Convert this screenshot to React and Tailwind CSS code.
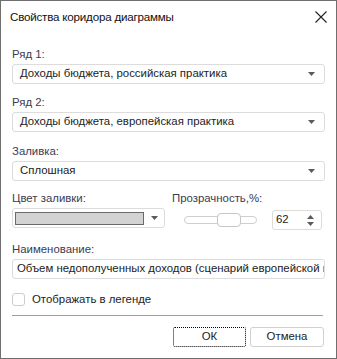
import React from "react";

const Arrow = () => (
  <svg width="7" height="4" viewBox="0 0 7 4" className="shrink-0">
    <path d="M0 0H7L3.5 4Z" fill="#5a5a5a" />
  </svg>
);

const Select = ({ value }) => (
  <div className="h-[20px] border border-[#dcdcdc] rounded-[3px] bg-white flex items-center justify-between pl-[7px] pr-[9px]">
    <span className="text-[11.4px] text-[#222]">{value}</span>
    <Arrow />
  </div>
);

const Label = ({ children, className = "" }) => (
  <div className={"text-[11.4px] leading-[14px] text-[#3b3b4f] h-[17px] " + className}>{children}</div>
);

export default function App() {
  return (
    <div
      className="w-[337px] h-[359px] bg-white border border-[#6f6f6f] flex flex-col overflow-hidden"
      style={{ fontFamily: '"Liberation Sans", Arial, sans-serif' }}
    >
      <div className="h-[31px] flex items-center justify-between pl-[9px] pr-[9px] shrink-0">
        <span className="text-[11.6px] tracking-[-0.2px] text-[#111]">Свойства коридора диаграммы</span>
        <svg width="12" height="12" viewBox="0 0 12 12">
          <path d="M0.5 0.5L11.5 11.5M11.5 0.5L0.5 11.5" stroke="#222" strokeWidth="1.1" />
        </svg>
      </div>
      <div className="px-[11px] flex flex-col">
        <Label className="mt-[15px]">Ряд 1:</Label>
        <Select value="Доходы бюджета, российская практика" />
        <Label className="mt-[11px]">Ряд 2:</Label>
        <Select value="Доходы бюджета, европейская практика" />
        <Label className="mt-[12px]">Заливка:</Label>
        <Select value="Сплошная" />
        <div className="flex mt-[10px]">
          <div className="w-[153px] flex flex-col">
            <Label>Цвет заливки:</Label>
            <div className="h-[20px] border border-[#dcdcdc] rounded-[3px] bg-white flex items-center pl-[2px] pr-[6px] gap-[7px]">
              <div className="w-[131px] h-[13px] bg-[#d3d3d3] border border-[#6a6a6a]" />
              <Arrow />
            </div>
          </div>
          <div className="ml-[7px] flex flex-col flex-1">
            <Label>Прозрачность,%:</Label>
            <div className="flex items-center mt-[2px]">
              <div className="relative w-[73px] h-[8px] ml-[12px] border border-[#cfcfcf] rounded-full bg-white">
                <div className="absolute left-[32px] top-[-4px] w-[24px] h-[14px] border border-[#c6c6c6] rounded-[4px] bg-white" />
              </div>
              <div className="ml-[15px] w-[50px] h-[20px] border border-[#dcdcdc] rounded-[3px] bg-white flex items-center justify-between pl-[3px] pr-[7px]">
                <span className="text-[11.4px] text-[#222]">62</span>
                <div className="flex flex-col gap-[3px]">
                  <svg width="7" height="4" viewBox="0 0 7 4"><path d="M0 4H7L3.5 0Z" fill="#5a5a5a" /></svg>
                  <svg width="7" height="4" viewBox="0 0 7 4"><path d="M0 0H7L3.5 4Z" fill="#5a5a5a" /></svg>
                </div>
              </div>
            </div>
          </div>
        </div>
        <Label className="mt-[12px]">Наименование:</Label>
        <div className="h-[20px] border border-[#dcdcdc] rounded-[3px] bg-white flex items-center pl-[4px] overflow-hidden whitespace-nowrap">
          <span className="text-[11.4px] text-[#222]">Объем недополученных доходов (сценарий европейской практики)</span>
        </div>
        <div className="flex items-center mt-[14px] h-[13px]">
          <div className="w-[13px] h-[13px] border border-[#cdcdcd] rounded-[3px] bg-white" />
          <span className="ml-[7px] text-[11.4px] text-[#222]">Отображать в легенде</span>
        </div>
        <div className="mt-[9px] h-px bg-[#a0a0a0] mr-[2px]" />
        <div className="flex justify-end mt-[11px] gap-[4px] pr-[1px]">
          <button className="w-[73px] h-[20px] border border-dotted border-black rounded-[2px] bg-white text-[11.4px] text-[#222] flex items-center justify-center">
            ОК
          </button>
          <button className="w-[74px] h-[20px] border border-[#d0d0d0] rounded-[3px] bg-white text-[11.4px] text-[#222] flex items-center justify-center">
            Отмена
          </button>
        </div>
      </div>
    </div>
  );
}
